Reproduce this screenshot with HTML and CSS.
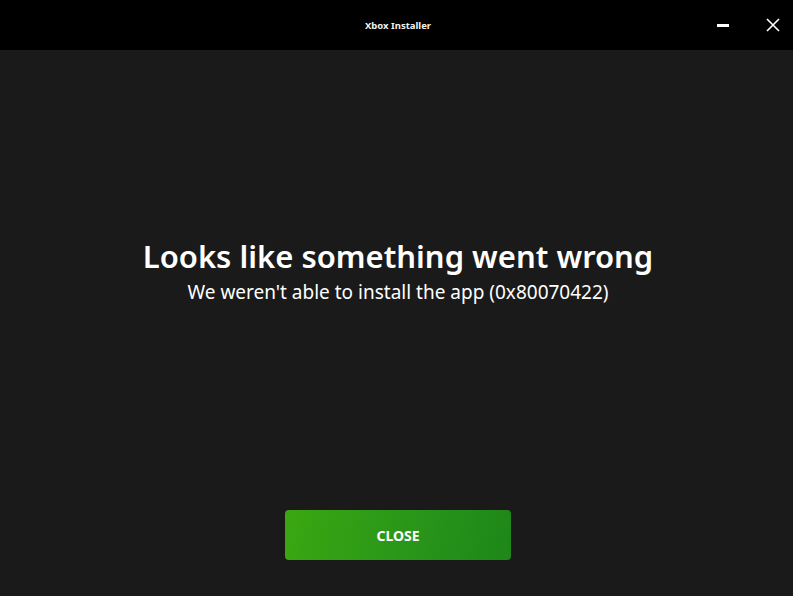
FILE: index.html
```html
<!DOCTYPE html>
<html>
<head>
    <meta charset="utf-8" />
    <title>Xbox Installer</title>
    <link rel="stylesheet" href="styles.css">
</head>
<body>
    <div class="titlebar">
        <span class="title">Xbox Installer</span>
        <div class="controls">
            <span class="min"></span>
            <svg class="x" width="14" height="14" viewBox="0 0 14 14">
                <path d="M1 1L13 13M13 1L1 13" stroke="#fff" stroke-width="1.6" fill="none" />
            </svg>
        </div>
    </div>
    <div class="main">
        <h1 class="head">Looks like something went wrong</h1>
        <p class="sub">We weren't able to install the app (0x80070422)</p>
        <button class="close">CLOSE</button>
    </div>
</body>
</html>
```
FILE: styles.css
```css
html, body {
    margin: 0;
    height: 100%;
}

body {
    background-color: #1a1a1a;
    color: #ffffff;
    font-family: "Noto Sans", "Open Sans", sans-serif;
    display: flex;
    flex-direction: column;
}

.titlebar {
    height: 50px;
    background-color: #000000;
    display: flex;
    align-items: center;
    justify-content: center;
    position: relative;
}

.title {
    font-size: 9.5px;
    font-weight: 700;
    color: #f2f2f2;
    padding-left: 3px;
}

.controls {
    position: absolute;
    right: 13px;
    top: 18px;
    display: flex;
    align-items: center;
    gap: 37px;
}

.min {
    width: 12px;
    height: 3px;
    background-color: #ffffff;
}

.main {
    flex: 1;
    display: flex;
    flex-direction: column;
    align-items: center;
    padding-top: 186px;
    padding-bottom: 36px;
    padding-left: 3px;
}

.head {
    margin: 0;
    font-size: 31px;
    line-height: 40px;
    font-weight: 600;
}

.sub {
    margin: 4px 0 0 0;
    font-size: 19px;
    line-height: 24px;
}

.close {
    margin-top: auto;
    width: 226px;
    height: 50px;
    border: none;
    border-radius: 4px;
    background: linear-gradient(100deg, #3aa711 0%, #28941a 60%, #1e8718 100%);
    color: #ffffff;
    font-family: "Noto Sans", "Open Sans", sans-serif;
    font-size: 14px;
    font-weight: 700;
}
```
